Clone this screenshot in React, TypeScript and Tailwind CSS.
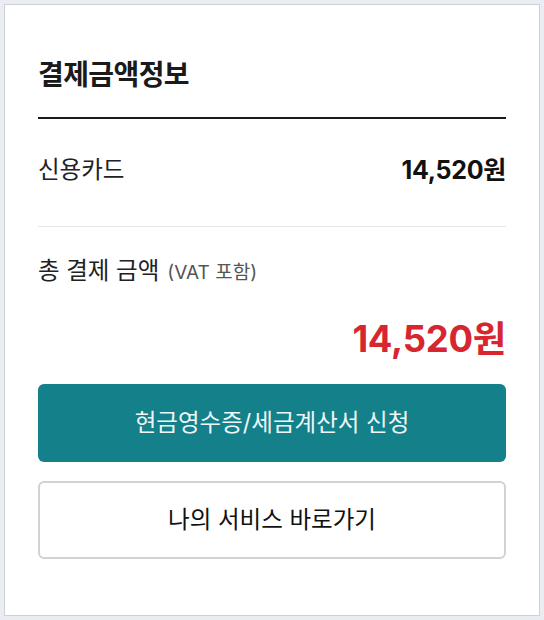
const font = { fontFamily: 'Inter, "Noto Sans CJK KR", sans-serif' };

export default function App() {
  return (
    <div className="min-h-screen bg-[#e9ecf0] p-1" style={font}>
      <div className="bg-white border border-[#cdd2d8] px-[33px] pt-[52px] h-[612px]">
        {/* 결제금액정보 */}
        <h2 className="text-[28px] font-bold text-[#1a1a1a] leading-[36px] tracking-[-0.6px]">
          결제금액정보
        </h2>
        <div className="mt-[24px] h-[2px] bg-[#1a1a1a]" />

        <div className="flex items-center justify-between h-[108px] pb-[6px] border-b border-[#e2e5e9]">
          <span className="text-[23.5px] leading-[32px] text-[#222]">신용카드</span>
          <span className="text-[25px] leading-[32px] font-bold text-[#111] tracking-[-0.3px]">14,520원</span>
        </div>

        <div className="pt-[28px]">
          <div className="flex items-baseline gap-[8px] leading-[32px]">
            <span className="text-[23.5px] text-[#222]">총 결제 금액</span>
            <span className="text-[19px] text-[#555]">(VAT 포함)</span>
          </div>
          <div className="mt-[28px] text-right text-[36.5px] font-bold text-[#d7262f] leading-[44px] tracking-[-0.3px]">
            14,520원
          </div>
        </div>

        <div className="mt-[23px] flex flex-col gap-[19px]">
          <button className="h-[78px] w-full rounded-[6px] bg-[#13808a] text-[23.5px] text-[#eef6f6]">
            현금영수증/세금계산서 신청
          </button>
          <button className="h-[78px] w-full rounded-[6px] border-2 border-[#cfd3d8] bg-white text-[23.5px] text-[#111]">
            나의 서비스 바로가기
          </button>
        </div>
      </div>
    </div>
  );
}
